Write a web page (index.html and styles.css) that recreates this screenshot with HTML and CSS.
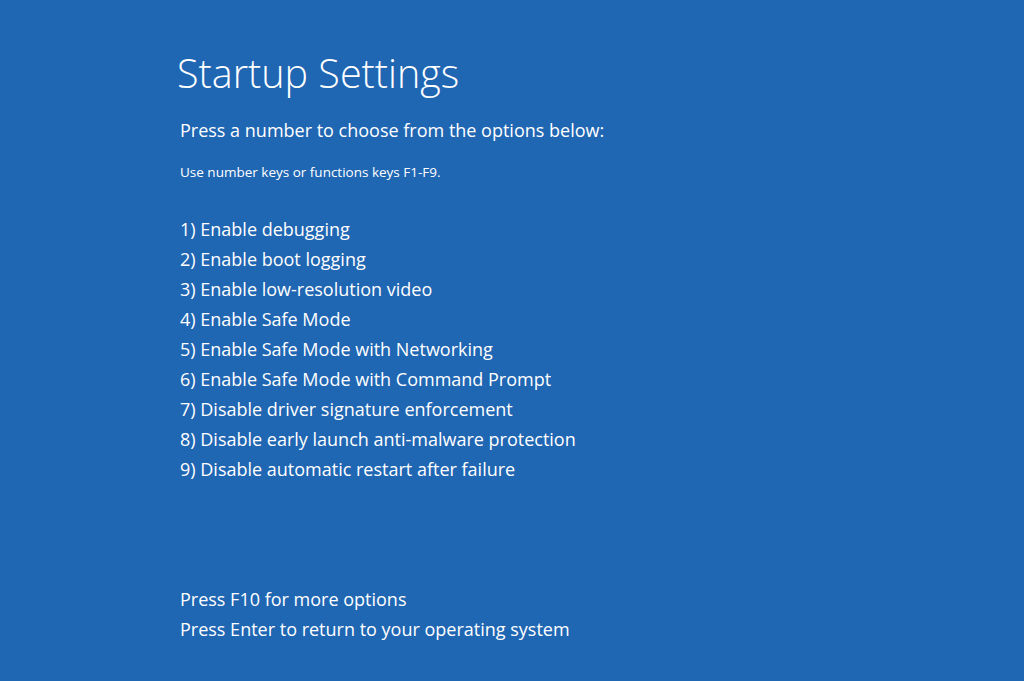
FILE: index.html
```html
<!DOCTYPE html>
<html>
	<head>
		<title>Startup Settings</title>
		<link rel="stylesheet" href="styles.css">
	</head>
	<body>
		<div class="screen">
			<h1 class="title">Startup Settings</h1>
			<p class="lead">Press a number to choose from the options below:</p>
			<p class="hint">Use number keys or functions keys F1-F9.</p>
			<ul class="options">
				<li>1) Enable debugging</li>
				<li>2) Enable boot logging</li>
				<li>3) Enable low-resolution video</li>
				<li>4) Enable Safe Mode</li>
				<li>5) Enable Safe Mode with Networking</li>
				<li>6) Enable Safe Mode with Command Prompt</li>
				<li>7) Disable driver signature enforcement</li>
				<li>8) Disable early launch anti-malware protection</li>
				<li>9) Disable automatic restart after failure</li>
			</ul>
			<ul class="footer">
				<li>Press F10 for more options</li>
				<li>Press Enter to return to your operating system</li>
			</ul>
		</div>
	</body>
</html>
```

FILE: styles.css
```css
body {
	margin: 0;
	padding: 0;
	background-color: #1f66b3;
	color: #fff;
	font-family: "Open Sans", "Noto Sans", sans-serif;
	height: 100vh;
	overflow: hidden;
}

.screen {
	padding: 46px 0 0 180px;
}

.title {
	margin: 0 0 0 -3px;
	font-size: 39.5px;
	font-weight: 300;
	line-height: 54px;
}

.lead {
	margin: 17px 0 0;
	font-size: 18px;
	line-height: 26px;
}

.hint {
	margin: 20px 0 0;
	font-size: 13.5px;
	line-height: 18px;
}

.options,
.footer {
	list-style: none;
	margin: 0;
	padding: 0;
	font-size: 18px;
	line-height: 30px;
}

.options {
	margin-top: 33px;
}

.footer {
	margin-top: 100px;
}
```
